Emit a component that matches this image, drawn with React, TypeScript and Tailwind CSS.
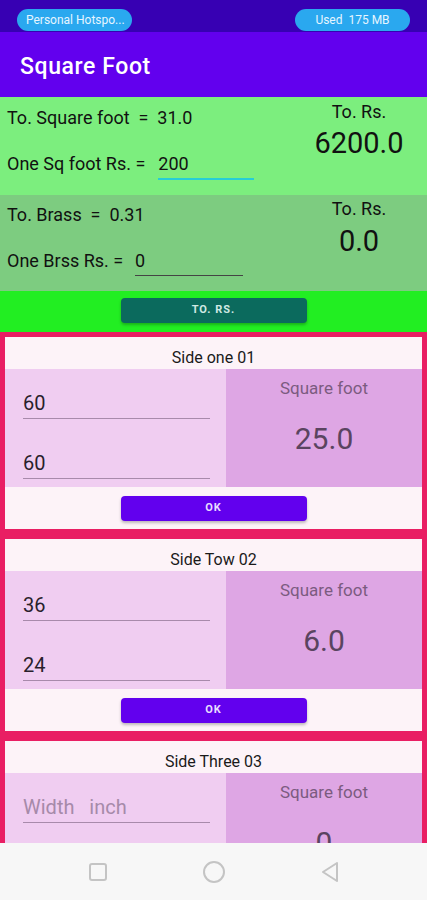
import React from "react";

const FONT = { fontFamily: "Roboto, 'Noto Sans', sans-serif" };

function Line({ text, hint, top }: { text: string; hint?: boolean; top: string }) {
  return (
    <div className={`${top} ml-[18px] w-[187px] border-b-[1.5px] border-[#a88aab] pb-[3px]`}>
      <div className={`text-[20px] leading-[23px] whitespace-pre ${hint ? "text-[#a68aa9]" : "text-[#2a1f2c]"}`}>{text}</div>
    </div>
  );
}

function SideCard({
  title,
  a,
  b,
  result,
  hint,
}: {
  title: string;
  a: string;
  b: string;
  result: string;
  hint?: boolean;
}) {
  return (
    <div className="h-[192px] shrink-0 bg-[#fdf3f8] flex flex-col">
      <div className="h-[32px] pt-[11px] text-center text-[16px] leading-[19px] text-[#1a1a1a]">{title}</div>
      <div className="h-[118px] flex">
        <div className="w-[221px] bg-[#f0cdf1]">
          <Line text={a} hint={hint} top="mt-[23px]" />
          <Line text={b} hint={hint} top="mt-[33px]" />
        </div>
        <div className="flex-1 bg-[#dea6e4] flex flex-col items-center pt-[9px]">
          <div className="text-[17px] leading-[20px] text-[#7b5b80]">Square foot</div>
          <div className="mt-[23px] text-[30px] leading-[35px] text-[#5a4460]">{result}</div>
        </div>
      </div>
      <div className="flex-1 flex justify-center pt-[9px]">
        <div className="w-[186px] h-[25px] rounded-[4px] bg-[#6200ee] shadow-[0_2px_3px_rgba(0,0,0,0.25)] flex items-center justify-center text-[11px] font-bold tracking-[1px] text-[#e8dcff]">
          OK
        </div>
      </div>
    </div>
  );
}

export default function App() {
  return (
    <div className="w-[427px] h-[900px] flex flex-col overflow-hidden bg-white" style={FONT}>
      {/* status bar */}
      <div className="h-[32px] shrink-0 bg-[#3700b3] flex items-end justify-between px-[17px] pb-[1px]">
        <div className="w-[115px] h-[22px] rounded-full bg-[#2aa8ef] flex items-center pl-[9px] text-[12px] text-[#e6f5ff]">
          Personal Hotspo...
        </div>
        <div className="w-[115px] h-[22px] rounded-full bg-[#2aa8ef] flex items-center justify-center text-[12px] text-[#e6f5ff] whitespace-pre">
          Used  175 MB
        </div>
      </div>

      {/* toolbar */}
      <div className="h-[65px] shrink-0 bg-[#6200ee] flex items-center pl-[20px] pt-[6px]">
        <span className="text-[23px] font-medium tracking-[0.6px] text-white">Square Foot</span>
      </div>

      <div className="flex-1 overflow-hidden flex flex-col">
        {/* sq foot */}
        <div className="h-[98px] shrink-0 bg-[#7cee7e] flex">
          <div className="flex-1 pl-[7px] pt-[10px] text-[18px] leading-[21px] text-[#111]">
            <div className="whitespace-pre">To. Square foot  =  31.0</div>
            <div className="mt-[25px] flex items-baseline">
              <span className="whitespace-pre">One Sq foot Rs. =  </span>
              <div className="ml-[4px] w-[96px] border-b-2 border-[#26cdd6] pb-[4px]">200</div>
            </div>
          </div>
          <div className="w-[130px] mr-[3px] flex flex-col items-center pt-[4px] text-[#111]">
            <div className="text-[18px] leading-[21px]">To. Rs.</div>
            <div className="mt-[4px] text-[29px] leading-[34px]">6200.0</div>
          </div>
        </div>

        {/* brass */}
        <div className="h-[96px] shrink-0 bg-[#7dcc80] flex">
          <div className="flex-1 pl-[7px] pt-[9px] text-[18px] leading-[21px] text-[#111]">
            <div className="whitespace-pre">To. Brass  =  0.31</div>
            <div className="mt-[25px] flex items-baseline">
              <span className="whitespace-pre">One Brss Rs. =  </span>
              <div className="ml-[3px] w-[108px] border-b border-[#444] pb-[4px]">0</div>
            </div>
          </div>
          <div className="w-[130px] mr-[3px] flex flex-col items-center pt-[3px] text-[#111]">
            <div className="text-[18px] leading-[21px]">To. Rs.</div>
            <div className="mt-[5px] text-[29px] leading-[34px]">0.0</div>
          </div>
        </div>

        {/* to rs button */}
        <div className="h-[41px] shrink-0 bg-[#22ee22] flex justify-center pt-[7px]">
          <div className="w-[186px] h-[25px] rounded-[4px] bg-[#0b6a5d] shadow-[0_2px_3px_rgba(0,0,0,0.25)] flex items-center justify-center text-[11px] font-bold tracking-[1px] text-[#cfe9e3]">
            TO. RS.
          </div>
        </div>

        {/* sides */}
        <div className="flex-1 bg-[#e91e63] px-[5px] pt-[5px] flex flex-col gap-[10px] overflow-hidden">
          <SideCard title="Side one 01" a="60" b="60" result="25.0" />
          <SideCard title="Side Tow 02" a="36" b="24" result="6.0" />
          <SideCard title="Side Three 03" a="Width   inch" b="Height   inch" result="0" hint />
        </div>
      </div>

      {/* nav bar */}
      <div className="h-[57px] shrink-0 bg-[#f7f7f7] flex items-center justify-between pl-[89px] pr-[87px] pt-[1px]">
        <div className="w-[18px] h-[18px] rounded-[3px] border-2 border-[#c4c4c4]" />
        <div className="w-[22px] h-[22px] rounded-full border-2 border-[#c4c4c4]" />
        <svg width="20" height="22" viewBox="0 0 20 22">
          <path d="M17 2 L3 11 L17 20 Z" fill="none" stroke="#c4c4c4" strokeWidth="2" strokeLinejoin="round" />
        </svg>
      </div>
    </div>
  );
}
